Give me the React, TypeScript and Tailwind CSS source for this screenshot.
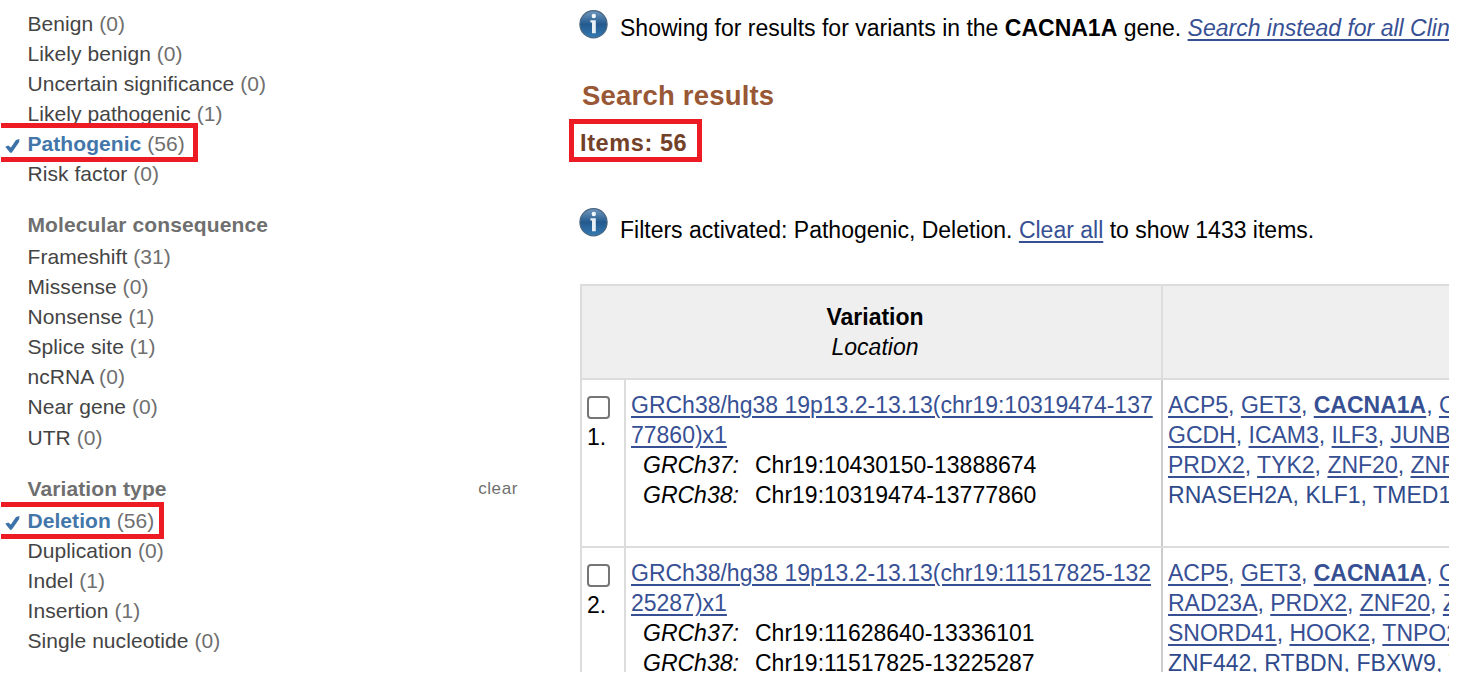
import type { ReactNode } from "react";

type Filter = { name: string; count: number; active?: boolean };

const significance: Filter[] = [
  { name: "Benign", count: 0 },
  { name: "Likely benign", count: 0 },
  { name: "Uncertain significance", count: 0 },
  { name: "Likely pathogenic", count: 1 },
  { name: "Pathogenic", count: 56, active: true },
  { name: "Risk factor", count: 0 },
];

const consequence: Filter[] = [
  { name: "Frameshift", count: 31 },
  { name: "Missense", count: 0 },
  { name: "Nonsense", count: 1 },
  { name: "Splice site", count: 1 },
  { name: "ncRNA", count: 0 },
  { name: "Near gene", count: 0 },
  { name: "UTR", count: 0 },
];

const variationType: Filter[] = [
  { name: "Deletion", count: 56, active: true },
  { name: "Duplication", count: 0 },
  { name: "Indel", count: 1 },
  { name: "Insertion", count: 1 },
  { name: "Single nucleotide", count: 0 },
];

const variants = [
  {
    title: ["GRCh38/hg38 19p13.2-13.13(chr19:10319474-137", "77860)x1"],
    grch37: "Chr19:10430150-13888674",
    grch38: "Chr19:10319474-13777860",
    genes: [
      ["ACP5", "GET3", "CACNA1A", "CALR"],
      ["GCDH", "ICAM3", "ILF3", "JUNB"],
      ["PRDX2", "TYK2", "ZNF20", "ZNF44"],
      ["RNASEH2A", "KLF1", "TMED1"],
    ],
  },
  {
    title: ["GRCh38/hg38 19p13.2-13.13(chr19:11517825-132", "25287)x1"],
    grch37: "Chr19:11628640-13336101",
    grch38: "Chr19:11517825-13225287",
    genes: [
      ["ACP5", "GET3", "CACNA1A", "CALR"],
      ["RAD23A", "PRDX2", "ZNF20", "ZNF44"],
      ["SNORD41", "HOOK2", "TNPO2"],
      ["ZNF442", "RTBDN", "FBXW9", "TRMT1"],
    ],
  },
];

const link = "text-[#375094] underline decoration-[1.7px] underline-offset-[3px]";

function CheckIcon() {
  return (
    <svg className="absolute top-[9px] left-[5px] h-4 w-[15px]" viewBox="0 0 15 16">
      <path d="M0.3 8.8 3.2 7.4 5.9 9.6 11 2 14.4 1 14.2 4 7.6 13.6 6.2 15 4.9 14.4Z" fill="#3d72a8" />
    </svg>
  );
}

function InfoIcon() {
  return (
    <svg className="mt-px h-[29px] w-[29px] shrink-0" viewBox="0 0 29 29">
      <defs>
        <linearGradient id="ball" x1="0" y1="0" x2="0" y2="1">
          <stop offset="0" stopColor="#7098bd" />
          <stop offset="0.35" stopColor="#3b6d9d" />
          <stop offset="0.5" stopColor="#235a8e" />
          <stop offset="1" stopColor="#3479b2" />
        </linearGradient>
      </defs>
      <circle cx="14.5" cy="14.2" r="13.6" fill="url(#ball)" stroke="#4a6680" strokeWidth="1.2" />
      <circle cx="14.8" cy="6" r="2.2" fill="#f2f7fb" />
      <path d="M11.4 10.2h5.4v13h-3.8V12.4h-1.6z" fill="#e8f0f6" />
    </svg>
  );
}

function FilterList({ items }: { items: Filter[] }) {
  return (
    <ul>
      {items.map((f) => (
        <li key={f.name} className="relative h-[30.1px] pl-[27.5px] text-[21px] leading-[30px] tracking-[0.06px] text-[#6f6f6f]">
          {f.active && <CheckIcon />}
          <span className={f.active ? "font-bold text-[#4376a9]" : "text-[#444]"}>{f.name}</span> ({f.count})
        </li>
      ))}
    </ul>
  );
}

function Notice({ children }: { children: ReactNode }) {
  return (
    <div className="-ml-px flex h-[34px] items-start gap-3">
      <InfoIcon />
      {children}
    </div>
  );
}

function GeneLine({ genes, last }: { genes: string[]; last: boolean }) {
  return (
    <div className={`overflow-hidden text-[#2f4a8b] ${last ? "h-[26px] tracking-[0.06px]" : "h-[30px]"}`}>
      {genes.map((g, i) => (
        <span key={g}>
          {i > 0 && ", "}
          <span className={last ? "" : g === "CACNA1A" ? `font-bold ${link}` : link}>{g}</span>
        </span>
      ))}
    </div>
  );
}

export default function App() {
  return (
    <div className="h-[692px] w-[1458px] overflow-hidden bg-white font-['Liberation_Sans',Arial,sans-serif] text-[23px] leading-[30px] whitespace-nowrap text-black">
      <div className="relative flex h-[672px] w-[1449px] overflow-hidden">
        <aside className="w-[580px] shrink-0 pt-[9px]">
          <FilterList items={significance} />
          <h3 className="mt-[20.4px] h-8 pl-[27.5px] text-[21px] leading-[30px] font-bold tracking-[0.12px] text-[#6f6f6f]">Molecular consequence</h3>
          <FilterList items={consequence} />
          <div className="mt-[21.3px] flex h-8 justify-between pr-[62px] pl-[27.5px] text-[21px] leading-[30px] text-[#6f6f6f]">
            <h3 className="font-bold tracking-[0.1px]">Variation type</h3>
            <span className="text-[17px] tracking-[0.6px]">clear</span>
          </div>
          <FilterList items={variationType} />
        </aside>

        <main className="w-[869px] shrink-0 pt-[9px]">
          <Notice>
            <p className="pt-1">
              Showing for results for variants in the <b>CACNA1A</b> gene.{" "}
              <a className={`italic ${link}`}>Search instead for all ClinVar</a>
            </p>
          </Notice>
          <h2 className="mt-[35px] h-9 pl-[2px] text-[27.5px] leading-9 font-bold tracking-[0.2px] text-[#985735]">Search results</h2>
          <h3 className="mt-[14px] h-[30px] text-[23.5px] leading-[30px] font-bold tracking-[0.6px] text-[#724128]">Items: 56</h3>
          <div className="mt-[49px]">
            <Notice>
              <p className="pt-2">
                Filters activated: Pathogenic, Deletion. <a className={link}>Clear all</a> to show 1433 items.
              </p>
            </Notice>
          </div>

          <section className="mt-[43px] grid grid-cols-[44px_537px_1fr] border-t-2 border-l-2 border-[#dcdcdc]">
            <div className="col-span-2 h-[94px] border-r-2 border-b-2 border-[#dcdcdc] bg-[#efefef] pt-4 pl-[7px] text-center">
              <div className="font-bold">Variation</div>
              <div className="italic">Location</div>
            </div>
            <div className="border-b-2 border-[#dcdcdc] bg-[#efefef]" />
            {variants.map((v, row) => (
              <div key={v.grch38} className="col-span-3 grid h-[168px] grid-cols-subgrid border-b-2 border-[#dcdcdc]">
                <div className="border-r-2 border-[#dcdcdc] pt-4 pl-[5px]">
                  <div className="h-[23px] w-[23px] rounded-[4px] border-2 border-[#767676] bg-white" />
                  <div className="mt-[3px] h-[30px]">{row + 1}.</div>
                </div>
                <div className="border-r-2 border-[#ccc] pt-[10px] pl-[5px]">
                  <div><a className={link}>{v.title[0]}</a></div>
                  <div><a className={link}>{v.title[1]}</a></div>
                  <div className="flex pl-3"><i className="w-[112px]">GRCh37:</i><span>{v.grch37}</span></div>
                  <div className="flex pl-3"><i className="w-[112px]">GRCh38:</i><span>{v.grch38}</span></div>
                </div>
                <div className="overflow-hidden pt-[10px] pl-[5px]">
                  {v.genes.map((genes, i) => (
                    <GeneLine key={i} genes={genes} last={i === v.genes.length - 1} />
                  ))}
                </div>
              </div>
            ))}
          </section>
        </main>

        <div className="absolute top-[123px] left-px h-[39px] w-[197px] border-5 border-l-0 border-[#ed1c24]" />
        <div className="absolute top-[502px] left-px h-[37px] w-[163px] border-5 border-l-0 border-[#ed1c24]" />
        <div className="absolute top-[119px] left-[569px] h-[43px] w-[133px] border-5 border-[#ed1c24]" />
      </div>
    </div>
  );
}
